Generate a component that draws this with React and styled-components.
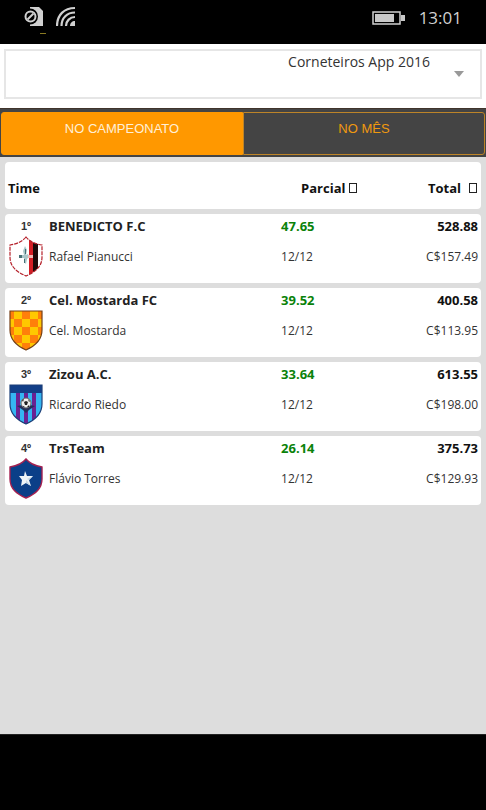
import React, { useState } from "react";
import styled, { createGlobalStyle } from "styled-components";

const GlobalStyle = createGlobalStyle`
  * { box-sizing: border-box; }
  body {
    margin: 0;
    background: #000;
    font-family: "Open Sans", "Noto Sans", sans-serif;
    font-size: 12px;
    color: #333;
  }
`;

const Screen = styled.div`
  min-height: 100vh;
  display: flex;
  flex-direction: column;
  background: #ddd;
`;

const StatusBar = styled.header`
  display: flex;
  align-items: center;
  justify-content: space-between;
  height: 44px;
  padding: 0 24px;
  background: #000;
  color: #d0d0d0;
`;

const StatusGroup = styled.div`
  display: flex;
  align-items: center;
  gap: ${(p) => p.$gap}px;
  padding-bottom: 8px;
`;

const SignalGroup = styled(StatusGroup)`
  padding-bottom: 2px;
`;

const Clock = styled.time`
  font-size: 17px;
  line-height: 24px;
`;

const LeaguePanel = styled.div`
  padding: 5px 4px 9px;
  background: #fff;
`;

const LeagueField = styled.div`
  position: relative;
`;

const LeagueSelect = styled.select`
  display: block;
  width: 100%;
  height: 50px;
  padding: 0 50px 26px 8px;
  appearance: none;
  border: 2px solid #e6e6e6;
  border-radius: 0;
  background: #fff;
  color: #333;
  font: 14px "Open Sans", "Noto Sans", sans-serif;
  text-align-last: right;
`;

const Caret = styled.svg`
  position: absolute;
  top: 22px;
  right: 18px;
  pointer-events: none;
`;

const Tabs = styled.nav`
  display: flex;
  height: 49px;
  padding: 3px 1px 2px;
  background: #444;
  border-top: 1px solid #40342c;
`;

const Tab = styled.button`
  flex: 1;
  padding: 0 0 11px;
  border: 1px solid ${(p) => (p.$active ? "#ff9800" : "#bd8428")};
  border-radius: ${(p) => (p.$side === "left" ? "3px 0 0 3px" : "0 3px 3px 0")};
  background: ${(p) => (p.$active ? "#ff9800" : "#444")};
  color: ${(p) => (p.$active ? "#fff0d8" : "#f0990f")};
  font: 13px "Liberation Sans", Arial, sans-serif;
  cursor: pointer;
`;

const Main = styled.main`
  flex: 1;
  padding: 0 5px;
`;

const Ranking = styled.table`
  width: 100%;
  table-layout: fixed;
  border-collapse: separate;
  border-spacing: 0 5px;
`;

const Col = styled.col`
  width: ${(p) => p.$width};
`;

const HeadRow = styled.tr`
  height: 47px;
`;

const HeadCell = styled.th`
  padding: 5px 4px 0 ${(p) => p.$inset}px;
  background: #fff;
  color: #111;
  font-size: 13px;
  font-weight: 700;
  line-height: 18px;
  text-align: ${(p) => p.$align};
  white-space: nowrap;

  &:first-child { border-radius: 4px 0 0 4px; }
  &:last-child { border-radius: 0 4px 4px 0; }
`;

const SortMark = styled.span`
  display: inline-block;
  width: 8px;
  height: 10px;
  margin-left: ${(p) => p.$gap}px;
  border: 1px solid #222;
`;

const TeamRow = styled.tr`
  height: 69px;
`;

const Cell = styled.td`
  padding: ${(p) => (p.$crest ? "2px 0 0 4px" : "2px 3px 0 0")};
  background: #fff;
  vertical-align: top;
  text-align: ${(p) => p.$align || "left"};

  &:first-child { border-radius: 4px 0 0 4px; }
  &:last-child { border-radius: 0 4px 4px 0; }
`;

const Rank = styled.div`
  width: 34px;
  font: 700 11px/20px "Liberation Sans", Arial, sans-serif;
  text-align: center;
`;

const Strong = styled.div`
  color: ${(p) => p.$color};
  font-size: 13px;
  font-weight: 700;
  line-height: 20px;
`;

const Detail = styled.div`
  margin-top: 11px;
  color: #333;
  font-size: 12px;
  line-height: 20px;
`;

const Crest = styled.svg`
  display: block;
`;

const BottomBar = styled.footer`
  height: 76px;
  background: #000;
  border-top: 1px solid #222;
`;

const POINTED = "M17 1C13 6 7 8 1 9V21C1 31 8 36 17 40C26 36 33 31 33 21V9C27 8 21 6 17 1Z";
const FLAT = "M1 1H33V20C33 30 26 36 17 40C8 36 1 30 1 20Z";

function StripeCrest() {
  return (
    <Crest width="34" height="41" viewBox="0 0 34 41" aria-hidden="true">
      <clipPath id="stripe"><path d={POINTED} /></clipPath>
      <g clipPath="url(#stripe)">
        <path fill="#fff" d="M0 0H34V41H0Z" />
        <path fill="#d31f26" d="M20 0H24V41H20Z" />
        <path fill="#1c0a0a" d="M24 0H29V41H24Z" />
      </g>
      <path d={POINTED} fill="none" stroke="#b5202a" strokeWidth="1.2" strokeDasharray="4 1" />
      <path fill="#a9c6c8" d="M16 10L18 14L17 19L19 18L20 21L18 23L17 28L15 26L15 22L12 22L12 19L15 19L14 15Z" />
      <path fill="#456f75" d="M10 19H13V22H10ZM16 13H17V18H16ZM15 23H16V27H15Z" />
      <path fill="#f2b8b4" d="M19 19H24V22H19Z" />
    </Crest>
  );
}

function CheckerCrest() {
  const squares = [];
  for (let y = 0; y < 5; y++) {
    for (let x = 0; x < 5; x++) {
      if ((x + y) % 2 === 0) {
        squares.push(<rect key={`${x}-${y}`} x={x * 8 - 3} y={y * 8 + 1} width="8" height="8" />);
      }
    }
  }
  return (
    <Crest width="34" height="41" viewBox="0 0 34 41" aria-hidden="true">
      <clipPath id="checker"><path d={FLAT} /></clipPath>
      <g clipPath="url(#checker)">
        <path fill="#ffc800" d="M0 0H34V41H0Z" />
        <g fill="#ff7f0a">{squares}</g>
      </g>
      <path d={FLAT} fill="none" stroke="#74401a" strokeWidth="1.2" />
    </Crest>
  );
}

function BallCrest() {
  return (
    <Crest width="34" height="41" viewBox="0 0 34 41" aria-hidden="true">
      <clipPath id="ball"><path d={FLAT} /></clipPath>
      <g clipPath="url(#ball)">
        <path fill="#35b5f2" d="M0 0H34V41H0Z" />
        <path fill="#6a2292" d="M7 9H11V41H7ZM15 9H19V41H15ZM23 9H27V41H23Z" />
        <path fill="#123f88" d="M0 0H34V9H0Z" />
        <path fill="#24305c" d="M8 22L13 21L21 21L26 22L20 26L17 29L14 26Z" />
      </g>
      <path d={FLAT} fill="none" stroke="#1d3f78" strokeWidth="1.2" />
      <circle cx="17" cy="19" r="5" fill="#eee" stroke="#666" />
      <path fill="#222" d="M17 17L19 18L18 21H16L15 18ZM13 16L15 15L14 18ZM19 15L21 17L20 18ZM14 22L16 23L14 23ZM20 21L20 23L18 23Z" />
    </Crest>
  );
}

function StarCrest() {
  return (
    <Crest width="34" height="41" viewBox="0 0 34 41" aria-hidden="true">
      <path d={POINTED} fill="#0b3f88" stroke="#a32050" strokeWidth="1.4" />
      <path fill="#eef4f8" d="M16 13L18 18L24 18L20 22L22 28L17 25L12 28L13 22L10 18L15 18Z" />
      <path fill="#c6d8e6" d="M24 18L20 22L18 21ZM22 28L17 25V22Z" />
    </Crest>
  );
}

const teams = [
  { rank: "1º", Badge: StripeCrest, name: "BENEDICTO F.C", owner: "Rafael Pianucci", partial: "47.65", total: "528.88", money: "C$157.49" },
  { rank: "2º", Badge: CheckerCrest, name: "Cel. Mostarda FC", owner: "Cel. Mostarda", partial: "39.52", total: "400.58", money: "C$113.95" },
  { rank: "3º", Badge: BallCrest, name: "Zizou A.C.", owner: "Ricardo Riedo", partial: "33.64", total: "613.55", money: "C$198.00" },
  { rank: "4º", Badge: StarCrest, name: "TrsTeam", owner: "Flávio Torres", partial: "26.14", total: "375.73", money: "C$129.93" },
];

export default function App() {
  const [tab, setTab] = useState("league");
  return (
    <>
      <GlobalStyle />
      <Screen>
        <StatusBar>
          <SignalGroup $gap={10}>
            <svg width="22" height="30" viewBox="0 0 22 30" aria-hidden="true">
              <path fill="#d0d0d0" d="M6 1H15L19 5V20H6Z" />
              <circle cx="6" cy="10.5" r="8" fill="#000" />
              <circle cx="6.5" cy="10.5" r="5" fill="none" stroke="#d0d0d0" strokeWidth="2" />
              <path d="M3.5 13.5L9.5 7.5" stroke="#d0d0d0" strokeWidth="2" />
              <path fill="#8a7a22" d="M16 27H22V28H16Z" />
            </svg>
            <svg width="20" height="30" viewBox="0 0 20 30" aria-hidden="true">
              <g fill="none" stroke="#d0d0d0" strokeWidth="2.2">
                <path d="M1 20C1 9 8 2 19 2" />
                <path d="M5.5 20C5.500 12 11 6.500 19 6.500" />
                <path d="M10 20C10 15 14 11 19 11" />
              </g>
              <path fill="#d0d0d0" d="M14 20C14 17 16 15 19 15V20Z" />
            </svg>
          </SignalGroup>
          <StatusGroup $gap={14}>
            <svg width="33" height="14" viewBox="0 0 33 14" aria-hidden="true">
              <path fill="none" stroke="#d0d0d0" strokeWidth="1.5" d="M1 1H28V13H1Z" />
              <path fill="#c8c8c8" d="M3 3H22V11H3ZM29 4H33V10H29Z" />
            </svg>
            <Clock>13:01</Clock>
          </StatusGroup>
        </StatusBar>

        <LeaguePanel>
          <LeagueField>
            <LeagueSelect aria-label="Liga">
              <option>Corneteiros App 2016</option>
            </LeagueSelect>
            <Caret width="10" height="6" viewBox="0 0 10 6" aria-hidden="true">
              <path fill="#999" d="M0 0H10L5 6Z" />
            </Caret>
          </LeagueField>
        </LeaguePanel>

        <Tabs>
          <Tab type="button" $side="left" $active={tab === "league"} onClick={() => setTab("league")}>NO CAMPEONATO</Tab>
          <Tab type="button" $side="right" $active={tab === "month"} onClick={() => setTab("month")}>NO MÊS</Tab>
        </Tabs>

        <Main>
          <Ranking>
            <colgroup>
              <Col $width="44px" />
              <Col $width="auto" />
              <Col $width="25%" />
              <Col $width="17%" />
            </colgroup>
            <thead>
              <HeadRow>
                <HeadCell colSpan={2} $align="left" $inset={3}>Time</HeadCell>
                <HeadCell $align="left" $inset={20}>Parcial<SortMark $gap={4} /></HeadCell>
                <HeadCell $align="right" $inset={0}>Total<SortMark $gap={8} /></HeadCell>
              </HeadRow>
            </thead>
            <tbody>
              {teams.map(({ rank, Badge, name, owner, partial, total, money }) => (
                <TeamRow key={rank}>
                  <Cell $crest>
                    <Rank>{rank}</Rank>
                    <Badge />
                  </Cell>
                  <Cell>
                    <Strong $color="#222">{name}</Strong>
                    <Detail>{owner}</Detail>
                  </Cell>
                  <Cell>
                    <Strong $color="#0a820a">{partial}</Strong>
                    <Detail>{"12/12"}</Detail>
                  </Cell>
                  <Cell $align="right">
                    <Strong $color="#111">{total}</Strong>
                    <Detail>{money}</Detail>
                  </Cell>
                </TeamRow>
              ))}
            </tbody>
          </Ranking>
        </Main>
        <BottomBar />
      </Screen>
    </>
  );
}
